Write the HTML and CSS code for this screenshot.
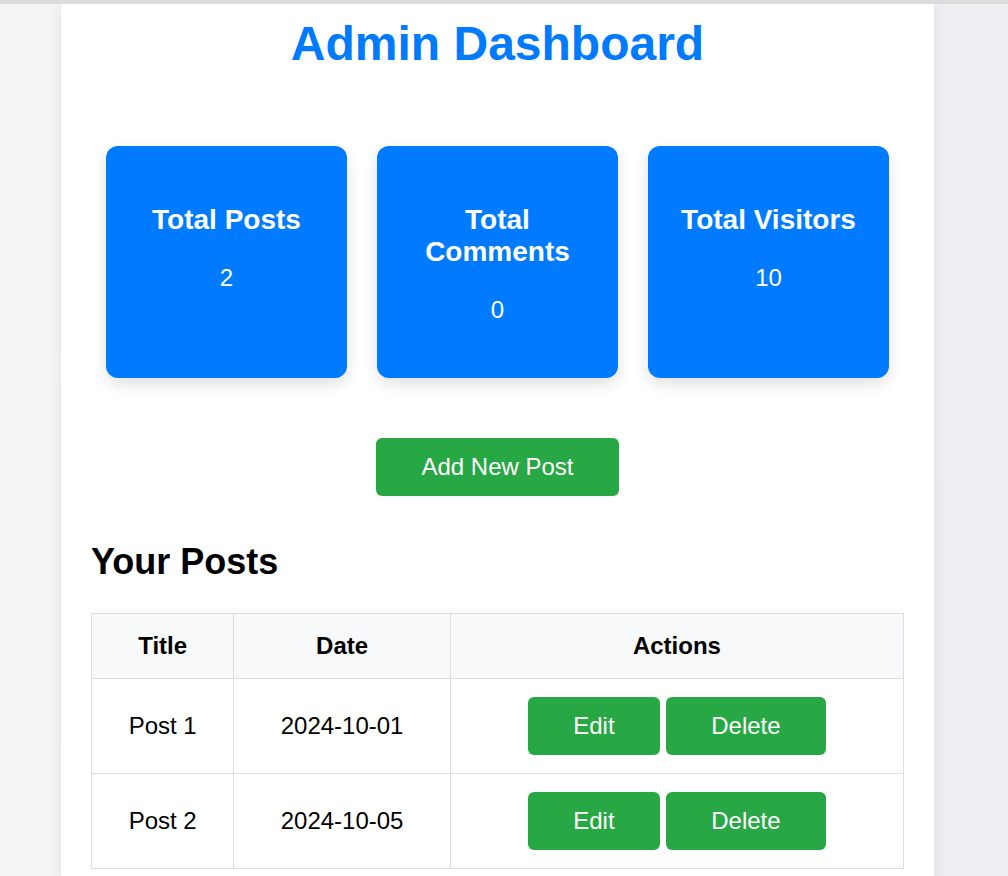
FILE: index.html
```html
<!DOCTYPE html>
<html lang="en">
<head>
<meta charset="utf-8">
<title>Admin Dashboard</title>
<link rel="stylesheet" href="styles.css">
</head>
<body>
<div class="container">
  <h1 class="page-title">Admin Dashboard</h1>
  <div class="stats">
    <div class="stat-card">
      <h3 class="stat-title">Total Posts</h3>
      <p class="stat-value">2</p>
    </div>
    <div class="stat-card">
      <h3 class="stat-title">Total Comments</h3>
      <p class="stat-value">0</p>
    </div>
    <div class="stat-card">
      <h3 class="stat-title">Total Visitors</h3>
      <p class="stat-value">10</p>
    </div>
  </div>
  <div class="add-row">
    <button class="btn btn-add">Add New Post</button>
  </div>
  <h2 class="section-title">Your Posts</h2>
  <table class="posts">
    <thead>
      <tr><th>Title</th><th>Date</th><th>Actions</th></tr>
    </thead>
    <tbody>
      <tr>
        <td>Post 1</td>
        <td>2024-10-01</td>
        <td><button class="btn">Edit</button> <button class="btn">Delete</button></td>
      </tr>
      <tr>
        <td>Post 2</td>
        <td>2024-10-05</td>
        <td><button class="btn">Edit</button> <button class="btn">Delete</button></td>
      </tr>
    </tbody>
  </table>
</div>
</body>
</html>
```
FILE: styles.css
```css
html, body {
  height: 100%;
}
body {
  margin: 0;
  padding: 0 13px 0 0;
  border-top: 4px solid #dcdcdc;
  box-sizing: border-box;
  background: linear-gradient(100deg, #f4f5f7 0%, #eceef1 100%);
  font-family: "Liberation Sans", Arial, sans-serif;
  color: #000;
  overflow: hidden;
}
.container {
  box-sizing: border-box;
  width: 873px;
  margin: 0 auto;
  min-height: 100%;
  padding: 12px 30px 30px;
  background: #fff;
  box-shadow: 0 0 12px rgba(0, 0, 0, 0.08);
}
.page-title {
  margin: 0 0 60px;
  text-align: center;
  color: #007bff;
  font-size: 48px;
  font-weight: bold;
  line-height: normal;
}
.stats {
  display: flex;
}
.stat-card {
  flex: 1;
  margin: 15px;
  padding: 30px;
  background: #007bff;
  color: #fff;
  border-radius: 12px;
  text-align: center;
  box-shadow: 0 6px 15px rgba(0, 0, 0, 0.12);
}
.stat-title {
  margin: 28px 0;
  font-size: 28px;
  font-weight: bold;
  line-height: normal;
}
.stat-value {
  margin: 24px 0;
  font-size: 24px;
  line-height: normal;
}
.add-row {
  display: flex;
  justify-content: center;
  margin-top: 45px;
}
.btn {
  padding: 15px 45px;
  border: none;
  border-radius: 6px;
  background: #28a745;
  color: #fff;
  font-family: "Liberation Sans", Arial, sans-serif;
  font-size: 24px;
  line-height: normal;
  cursor: pointer;
}
.section-title {
  margin: 45px 0 30px;
  font-size: 36px;
  font-weight: bold;
  line-height: normal;
}
.posts {
  width: 100%;
  border-collapse: collapse;
  font-size: 24px;
}
.posts th,
.posts td {
  padding: 18px;
  border: 1px solid #dddddd;
  text-align: center;
  line-height: normal;
}
.posts th {
  background: #f8f9fa;
  font-weight: bold;
}
```
